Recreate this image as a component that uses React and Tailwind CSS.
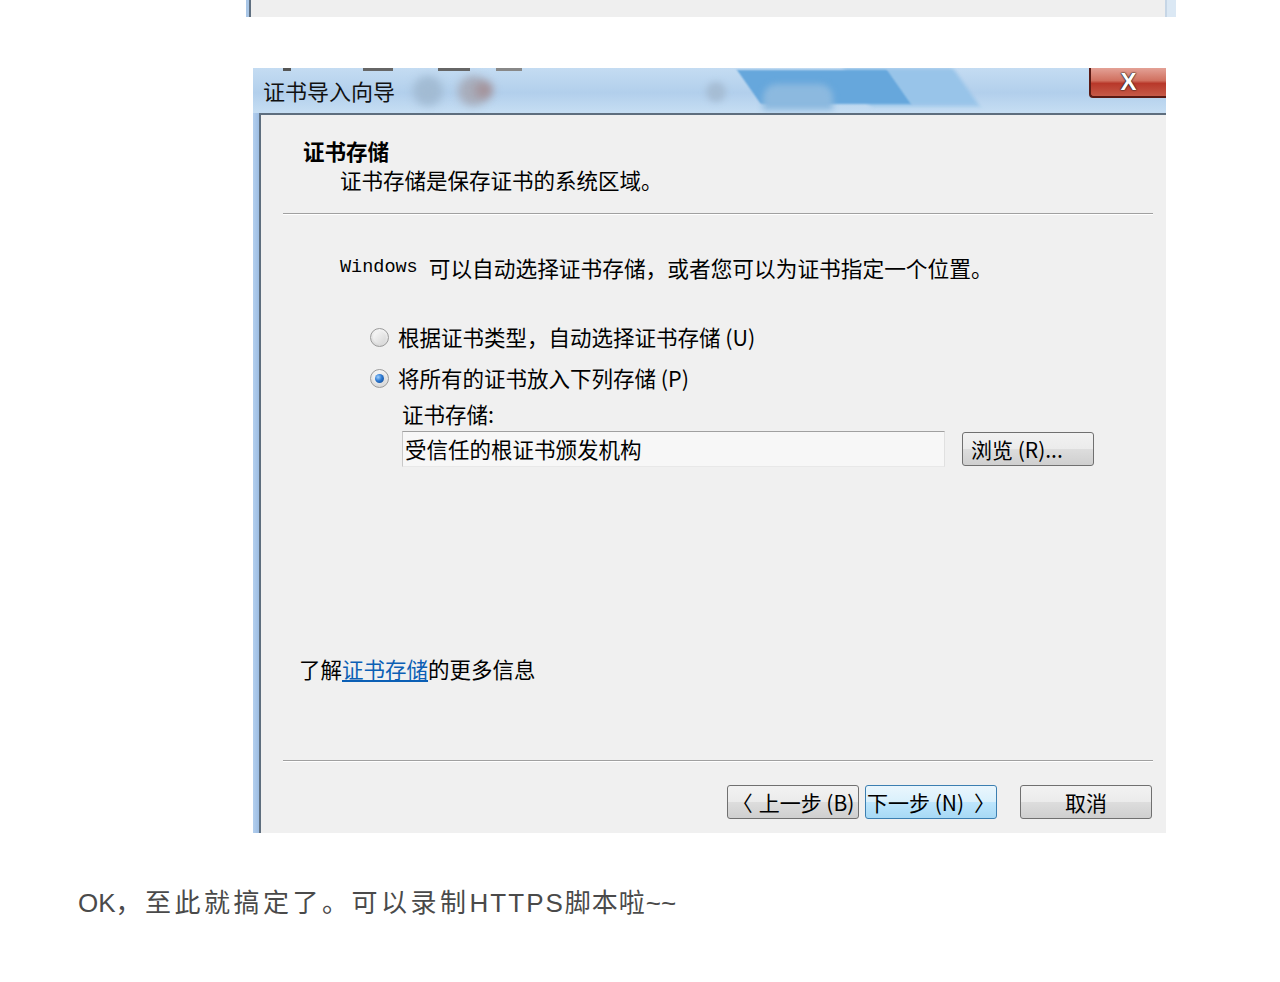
import React from 'react';

const cjk = { fontFamily: '"Noto Sans CJK SC", "Liberation Sans", sans-serif' };
const latin = { fontFamily: '"Liberation Sans", "Noto Sans CJK SC", sans-serif' };

const Radio = ({ checked }) => (
  <span className="relative flex h-[19px] w-[19px] items-center justify-center rounded-full border border-[#9a9a9a] bg-gradient-to-b from-[#f4f4f4] to-[#d8d8d8]">
    <span className="h-[13px] w-[13px] rounded-full bg-gradient-to-br from-[#fafafa] to-[#d6d6d6]" />
    {checked && (
      <span className="absolute left-[4px] top-[4px] h-[9px] w-[9px] rounded-full bg-[radial-gradient(circle_at_35%_35%,#9fd0ff_0%,#2b78d0_45%,#0b3f8a_100%)]" />
    )}
  </span>
);

const WinButton = ({ children, active, className = '' }) => (
  <div
    className={
      'flex h-[34px] w-[132px] items-center rounded-[3px] border text-[21px] leading-none text-black ' +
      (active
        ? 'border-[#3c7fb1] bg-[linear-gradient(#eaf6fd_0%,#d9f0fc_50%,#bee6fd_51%,#a7d9f5_100%)] '
        : 'border-[#707070] bg-[linear-gradient(#f2f2f2_0%,#ebebeb_50%,#dddddd_51%,#cfcfcf_100%)] ') +
      className
    }
  >
    {children}
  </div>
);

export default function App() {
  return (
    <div className="h-[982px] w-[1280px] overflow-hidden bg-white" style={cjk}>
      {/* bottom of the previous screenshot */}
      <div className="ml-[246px] flex h-[17px] w-[930px]">
        <div className="w-[3px] bg-[#a9c6e6]" />
        <div className="w-[2px] bg-[#5f6f80]" />
        <div className="flex-1 bg-[#efefef]" />
        <div className="w-[2px] bg-[#c6d6e6]" />
        <div className="w-[9px] bg-[#dbe8f4]" />
      </div>

      {/* dialog */}
      <div className="ml-[253px] mt-[50px] flex h-[766px] w-[913px] flex-col">
        {/* title bar */}
        <div className="relative h-[46px] overflow-hidden border-t border-white bg-[linear-gradient(180deg,#c4dcf2_0%,#b2cfec_55%,#c6def3_100%)]">
          <div className="absolute left-[590px] top-0 h-[38px] w-[110px] origin-top-left skew-x-[35deg] bg-[#98c4e9] blur-[2px]" />
          <div className="absolute left-[484px] top-[2px] h-[34px] w-[150px] origin-top-left skew-x-[35deg] bg-[#66a7dc] blur-[1px]" />
          <div className="absolute left-[510px] top-[16px] h-[26px] w-[70px] rounded-t-[14px] bg-[#8cb9df] blur-[3px]" />
          <div className="absolute left-[160px] top-[8px] h-[30px] w-[30px] rounded-full bg-[#a2bbd3] blur-[4px]" />
          <div className="absolute left-[205px] top-[8px] h-[30px] w-[30px] rounded-full bg-[#a8adbb] blur-[4px]" />
          <div className="absolute left-[222px] top-[13px] h-[18px] w-[18px] rounded-full bg-[#a4949c] blur-[4px]" />
          <div className="absolute left-[453px] top-[14px] h-[20px] w-[20px] rounded-full bg-[#a6bdd4] blur-[3px]" />
          <div className="absolute left-[30px] top-0 h-[3px] w-[8px] bg-[#555]" />
          <div className="absolute left-[110px] top-0 h-[3px] w-[30px] bg-[#666]" />
          <div className="absolute left-[185px] top-0 h-[3px] w-[32px] bg-[#666]" />
          <div className="absolute left-[243px] top-0 h-[3px] w-[26px] bg-[#888]" />
          <div className="relative flex h-full items-center pl-[10px] pb-[2px]">
            <span className="text-[22px] leading-none text-[#111]">证书导入向导</span>
          </div>
          <div className="absolute right-0 top-0 flex h-[30px] w-[77px] items-center justify-center rounded-bl-[4px] border-b-2 border-l-2 border-[#5a1a14] bg-[linear-gradient(180deg,#e3a196_0%,#d0705f_45%,#b8382a_55%,#c65a48_100%)]">
            <span
              className="text-[24px] font-bold leading-none text-white"
              style={{ fontFamily: '"Liberation Sans", sans-serif', textShadow: '0 0 2px #222, 0 0 1px #222, 0 0 1px #222' }}
            >
              X
            </span>
          </div>
        </div>

        {/* client */}
        <div className="flex flex-1">
          <div className="w-[6px] bg-[linear-gradient(90deg,#b3cfee,#9dbde3)]" />
          <div className="w-[2px] bg-[#5e6e7e]" />
          <div className="flex flex-1 flex-col border-t-2 border-[#5e6e7e] bg-[#f0f0f0] text-black">
            <div className="ml-[42px] mt-[22px] text-[21.5px] font-bold leading-[28px]">证书存储</div>
            <div className="ml-[79px] mt-px text-[21.5px] leading-[28px]">证书存储是保存证书的系统区域。</div>
            <div className="ml-[22px] mr-[13px] mt-[19px] h-[2px] border-t border-b border-t-[#a0a0a0] border-b-white" />

            <div className="ml-[79px] mt-[39px] flex items-center text-[21.7px] leading-[28px]">
              <span className="mr-[11px] text-[18.5px]" style={{ fontFamily: '"Liberation Mono", monospace' }}>Windows</span>
              <span>可以自动选择证书存储，或者您可以为证书指定一个位置。</span>
            </div>

            <div className="ml-[109px] mt-[41px] flex items-center gap-[9px] text-[21.5px] leading-[28px]">
              <Radio />
              <span>根据证书类型，自动选择证书存储 (U)</span>
            </div>
            <div className="ml-[109px] mt-[13px] flex items-center gap-[9px] text-[21.5px] leading-[28px]">
              <Radio checked />
              <span>将所有的证书放入下列存储 (P)</span>
            </div>
            <div className="ml-[141px] mt-[8px] text-[21.5px] leading-[28px]">证书存储:</div>
            <div className="ml-[141px] mt-[3px] flex h-[36px] items-center">
              <div className="flex h-[36px] w-[543px] items-center border border-t-[#a0a0a0] border-l-[#c8c8c8] border-r-[#e0e0e0] border-b-[#e8e8e8] bg-[#f7f7f7] pl-[2px] text-[21.5px]">
                受信任的根证书颁发机构
              </div>
              <WinButton className="ml-[17px] justify-start pl-[8px] text-[#222]">
                浏览 (R)...
              </WinButton>
            </div>

            <div className="ml-[38px] mt-[188px] text-[21.5px] leading-[28px]">
              了解<span className="text-[#0b5fb5] underline underline-offset-2">证书存储</span>的更多信息
            </div>

            <div className="ml-[22px] mr-[13px] mt-[77px] h-[2px] border-t border-b border-t-[#a0a0a0] border-b-white" />

            <div className="mt-[23px] flex pl-[466px]">
              <WinButton className="justify-center gap-[6px]">
                <span>〈</span>
                <span>上一步 (B)</span>
              </WinButton>
              <WinButton active className="ml-[6px] justify-center gap-[10px]">
                <span>下一步 (N)</span>
                <span>〉</span>
              </WinButton>
              <WinButton className="ml-[23px] justify-center">取消</WinButton>
            </div>
          </div>
        </div>
      </div>

      <div className="ml-[78px] mt-[50px] text-[26px] leading-[36px] text-[#4a4a4a]">
        <span style={latin}>OK</span>
        <span className="tracking-[3.5px]">，至此就搞定了。可以录制</span>
        <span className="tracking-[2px]" style={latin}>HTTPS</span>
        <span className="tracking-[1px]">脚本啦</span>
        <span style={latin}>~~</span>
      </div>
    </div>
  );
}
